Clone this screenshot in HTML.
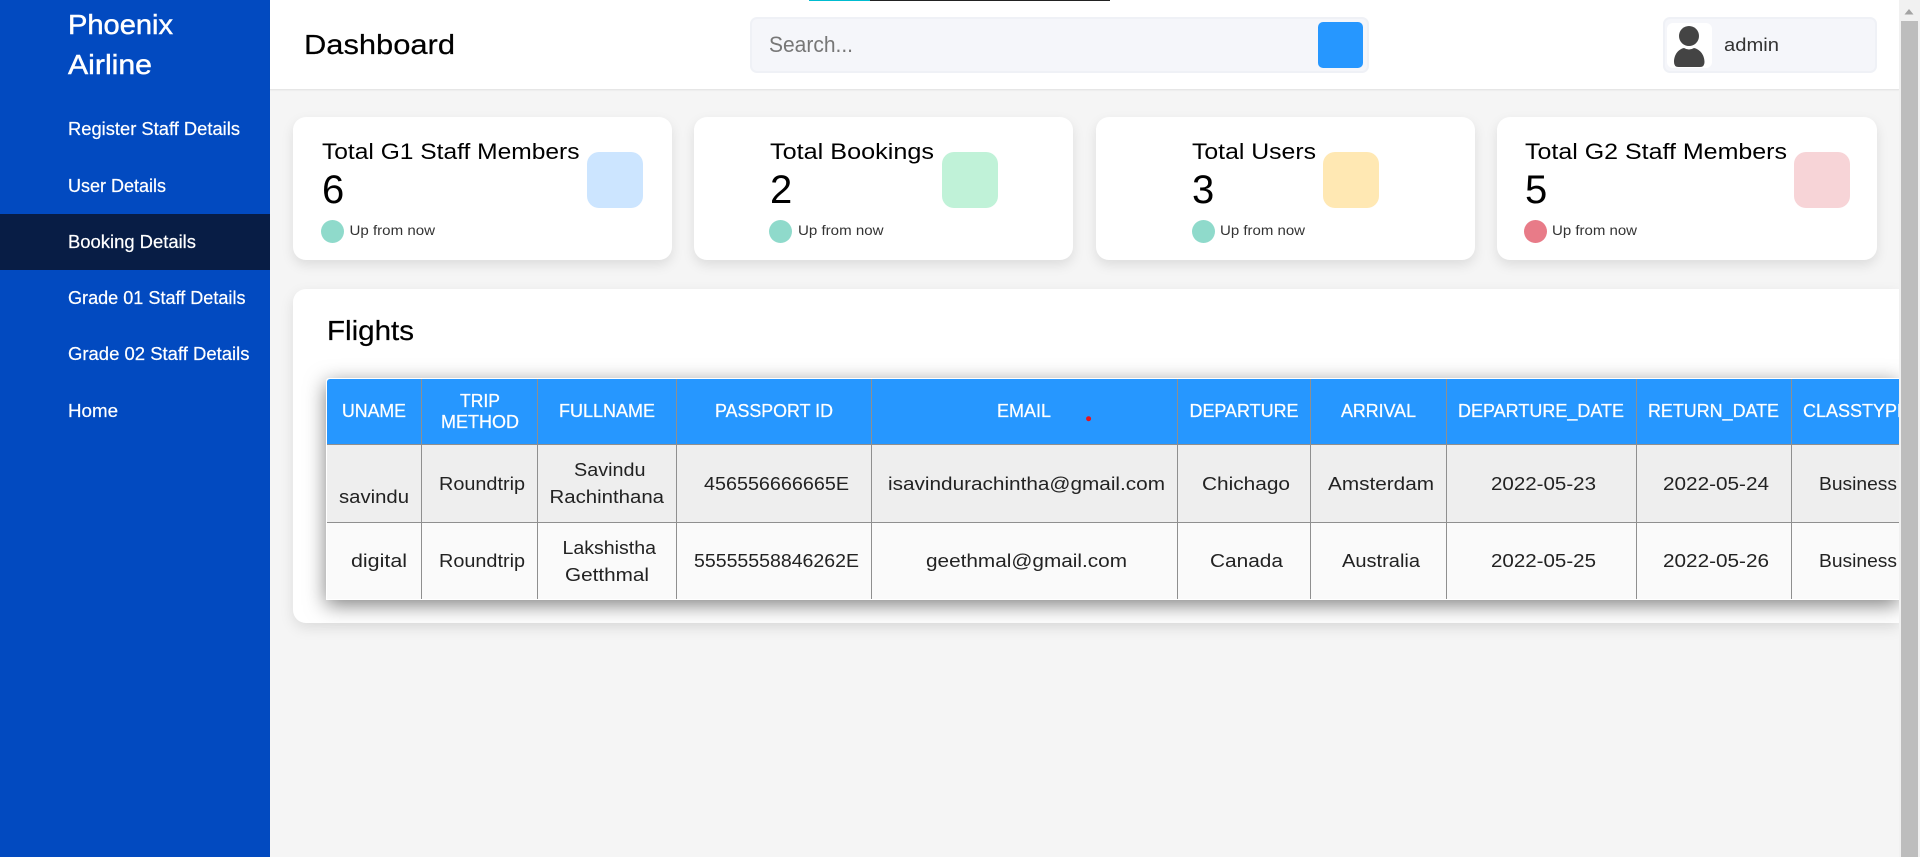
<!DOCTYPE html>
<html lang="en">
<head>
<meta charset="utf-8">
<title>Phoenix Airline Dashboard</title>
<style>
html,body{margin:0;padding:0;width:1920px;height:857px;overflow:hidden;background:#f5f5f5;font-family:"Liberation Sans",sans-serif}
.a{position:absolute;box-sizing:border-box}
.card{top:117px;height:143px;background:#fff;border-radius:13px;box-shadow:0 5px 12px rgba(0,0,0,.1)}
.ic{top:152px;width:56px;height:56px;border-radius:12px}
.dot{top:220px;width:23px;height:23px;border-radius:50%}
.vl{top:379px;width:1px;height:220px;background:#8f8f8f}
svg text{white-space:pre}
.side{font-size:18px;fill:#fff;stroke:#fff;stroke-width:.2px}
.ct{font-size:22px;fill:#000}
.num{font-size:40px;fill:#000}
.up{font-size:14px;fill:#333}
.th{font-size:18px;fill:#fff;stroke:#fff;stroke-width:.25px}
.td{font-size:18px;fill:#222}
</style>
</head>
<body>
<div class="a" style="left:0;top:0;width:270px;height:857px;background:#024ac0"></div>
<div class="a" style="left:0;top:214px;width:270px;height:56px;background:#081d45"></div>

<div class="a" style="left:270px;top:0;width:1629px;height:90px;background:#fff;border-bottom:1px solid #e6e6e6;box-shadow:0 1px 1px rgba(0,0,0,.04)"></div>
<div class="a" style="left:809px;top:0;width:61px;height:1px;background:#00bcd0"></div>
<div class="a" style="left:870px;top:0;width:240px;height:1px;background:#222"></div>

<div class="a" style="left:750px;top:17px;width:619px;height:56px;background:#f5f6fa;border:2px solid #eff1f6;border-radius:7px"></div>
<div class="a" style="left:1318px;top:22px;width:45px;height:46px;background:#2697ff;border-radius:5px"></div>

<div class="a" style="left:1663px;top:17px;width:214px;height:56px;background:#f5f6fa;border:2px solid #eff1f6;border-radius:7px"></div>
<div class="a" style="left:1667px;top:23px;width:45px;height:45px;background:#fff;border-radius:6px"></div>

<div class="a card" style="left:293px;width:379px"></div>
<div class="a card" style="left:694px;width:379px"></div>
<div class="a card" style="left:1096px;width:379px"></div>
<div class="a card" style="left:1497px;width:380px"></div>

<div class="a ic" style="left:587px;background:#cce5ff"></div>
<div class="a ic" style="left:942px;background:#c0f2d8"></div>
<div class="a ic" style="left:1323px;background:#ffe8b3"></div>
<div class="a ic" style="left:1794px;background:#f7d4d7"></div>

<div class="a dot" style="left:321px;background:#8fdacb"></div>
<div class="a dot" style="left:769px;background:#8fdacb"></div>
<div class="a dot" style="left:1192px;background:#8fdacb"></div>
<div class="a dot" style="left:1524px;background:#e87b88"></div>

<div class="a" style="left:293px;top:289px;width:1606px;height:334px;background:#fff;border-radius:13px 0 0 13px;box-shadow:0 5px 14px rgba(0,0,0,.1)"></div>

<div class="a" style="left:326px;top:378px;width:1573px;height:222px;background:#fff;box-shadow:0 5px 20px rgba(0,0,0,.5);border-radius:3px 0 0 0"></div>
<div class="a" style="left:327px;top:379px;width:1572px;height:65px;background:#2697ff;border-radius:3px 0 0 0"></div>
<div class="a" style="left:327px;top:444px;width:1572px;height:78px;background:#eeeeee"></div>
<div class="a" style="left:327px;top:522px;width:1572px;height:77px;background:#fafafa"></div>
<div class="a" style="left:327px;top:444px;width:1572px;height:1px;background:#8f8f8f"></div>
<div class="a" style="left:327px;top:522px;width:1572px;height:1px;background:#8f8f8f"></div>
<div class="a vl" style="left:421px"></div>
<div class="a vl" style="left:537px"></div>
<div class="a vl" style="left:676px"></div>
<div class="a vl" style="left:871px"></div>
<div class="a vl" style="left:1177px"></div>
<div class="a vl" style="left:1310px"></div>
<div class="a vl" style="left:1446px"></div>
<div class="a vl" style="left:1636px"></div>
<div class="a vl" style="left:1791px"></div>

<svg class="a" style="left:0;top:0" width="1920" height="857" viewBox="0 0 1920 857" xmlns="http://www.w3.org/2000/svg">
<g font-family="'Liberation Sans',sans-serif">
<text x="68" y="34" font-size="28" fill="#fff" stroke="#fff" stroke-width=".45" textLength="105" lengthAdjust="spacingAndGlyphs">Phoenix</text>
<text x="68" y="74" font-size="28" fill="#fff" stroke="#fff" stroke-width=".45" textLength="84" lengthAdjust="spacingAndGlyphs">Airline</text>
<text class="side" x="68" y="135" textLength="172" lengthAdjust="spacingAndGlyphs">Register Staff Details</text>
<text class="side" x="68" y="192" textLength="98" lengthAdjust="spacingAndGlyphs">User Details</text>
<text class="side" x="68" y="248" textLength="128" lengthAdjust="spacingAndGlyphs">Booking Details</text>
<text class="side" x="68" y="304" textLength="177.5" lengthAdjust="spacingAndGlyphs">Grade 01 Staff Details</text>
<text class="side" x="68" y="360" textLength="181.5" lengthAdjust="spacingAndGlyphs">Grade 02 Staff Details</text>
<text class="side" x="68" y="417" textLength="50" lengthAdjust="spacingAndGlyphs">Home</text>

<text x="304" y="54" font-size="28" fill="#000" stroke="#000" stroke-width=".2" textLength="151" lengthAdjust="spacingAndGlyphs">Dashboard</text>
<text x="769" y="52" font-size="22" fill="#777" textLength="84" lengthAdjust="spacingAndGlyphs">Search...</text>
<text x="1724" y="51" font-size="18" fill="#333" textLength="55" lengthAdjust="spacingAndGlyphs">admin</text>
<circle cx="1689" cy="36" r="10" fill="#444"/>
<path d="M1674 62C1674 54 1679 49 1684 48Q1689 51 1694 48C1699 49 1704.500 54 1704.500 62Q1704.500 67 1700 67H1678.500Q1674 67 1674 62Z" fill="#444"/>

<text class="ct" x="322" y="159" textLength="257.500" lengthAdjust="spacingAndGlyphs">Total G1 Staff Members</text>
<text class="ct" x="770" y="159" textLength="164" lengthAdjust="spacingAndGlyphs">Total Bookings</text>
<text class="ct" x="1192" y="159" textLength="124" lengthAdjust="spacingAndGlyphs">Total Users</text>
<text class="ct" x="1525" y="159" textLength="262" lengthAdjust="spacingAndGlyphs">Total G2 Staff Members</text>
<text class="num" x="322" y="203">6</text>
<text class="num" x="770" y="203">2</text>
<text class="num" x="1192" y="203">3</text>
<text class="num" x="1525" y="203">5</text>
<text class="up" x="349.500" y="235" textLength="85.500" lengthAdjust="spacingAndGlyphs">Up from now</text>
<text class="up" x="798" y="235" textLength="85.500" lengthAdjust="spacingAndGlyphs">Up from now</text>
<text class="up" x="1220" y="235" textLength="85" lengthAdjust="spacingAndGlyphs">Up from now</text>
<text class="up" x="1552" y="235" textLength="85" lengthAdjust="spacingAndGlyphs">Up from now</text>

<text x="327" y="340" font-size="28" fill="#000" stroke="#000" stroke-width=".2" textLength="87" lengthAdjust="spacingAndGlyphs">Flights</text>

<text class="th" x="342" y="417" textLength="64" lengthAdjust="spacingAndGlyphs">UNAME</text>
<text class="th" x="460" y="407" textLength="40" lengthAdjust="spacingAndGlyphs">TRIP</text>
<text class="th" x="441" y="428" textLength="78" lengthAdjust="spacingAndGlyphs">METHOD</text>
<text class="th" x="559" y="417" textLength="96" lengthAdjust="spacingAndGlyphs">FULLNAME</text>
<text class="th" x="715" y="417" textLength="118" lengthAdjust="spacingAndGlyphs">PASSPORT ID</text>
<text class="th" x="997" y="417" textLength="54" lengthAdjust="spacingAndGlyphs">EMAIL</text>
<text class="th" x="1189.500" y="417" textLength="109" lengthAdjust="spacingAndGlyphs">DEPARTURE</text>
<text class="th" x="1341" y="417" textLength="75" lengthAdjust="spacingAndGlyphs">ARRIVAL</text>
<text class="th" x="1458" y="417" textLength="166" lengthAdjust="spacingAndGlyphs">DEPARTURE_DATE</text>
<text class="th" x="1648" y="417" textLength="131" lengthAdjust="spacingAndGlyphs">RETURN_DATE</text>
<text class="th" x="1803" y="417" textLength="106" lengthAdjust="spacingAndGlyphs">CLASSTYPE</text>
<circle cx="1088.600" cy="418.700" r="2.500" fill="#e8141c"/>

<text class="td" x="339" y="503" textLength="70" lengthAdjust="spacingAndGlyphs">savindu</text>
<text class="td" x="439" y="490" textLength="86" lengthAdjust="spacingAndGlyphs">Roundtrip</text>
<text class="td" x="574" y="476" textLength="71.500" lengthAdjust="spacingAndGlyphs">Savindu</text>
<text class="td" x="549.500" y="503" textLength="114.500" lengthAdjust="spacingAndGlyphs">Rachinthana</text>
<text class="td" x="704" y="490" textLength="145" lengthAdjust="spacingAndGlyphs">456556666665E</text>
<text class="td" x="888" y="490" textLength="277" lengthAdjust="spacingAndGlyphs">isavindurachintha@gmail.com</text>
<text class="td" x="1202" y="490" textLength="88" lengthAdjust="spacingAndGlyphs">Chichago</text>
<text class="td" x="1328" y="490" textLength="106" lengthAdjust="spacingAndGlyphs">Amsterdam</text>
<text class="td" x="1491" y="490" textLength="105" lengthAdjust="spacingAndGlyphs">2022-05-23</text>
<text class="td" x="1663" y="490" textLength="106" lengthAdjust="spacingAndGlyphs">2022-05-24</text>
<text class="td" x="1819" y="490" textLength="78" lengthAdjust="spacingAndGlyphs">Business</text>

<text class="td" x="351" y="567" textLength="56" lengthAdjust="spacingAndGlyphs">digital</text>
<text class="td" x="439" y="567" textLength="86" lengthAdjust="spacingAndGlyphs">Roundtrip</text>
<text class="td" x="562.500" y="554" textLength="93.500" lengthAdjust="spacingAndGlyphs">Lakshistha</text>
<text class="td" x="565" y="581" textLength="84" lengthAdjust="spacingAndGlyphs">Getthmal</text>
<text class="td" x="694" y="567" textLength="165" lengthAdjust="spacingAndGlyphs">55555558846262E</text>
<text class="td" x="926" y="567" textLength="201" lengthAdjust="spacingAndGlyphs">geethmal@gmail.com</text>
<text class="td" x="1210" y="567" textLength="73" lengthAdjust="spacingAndGlyphs">Canada</text>
<text class="td" x="1342" y="567" textLength="78" lengthAdjust="spacingAndGlyphs">Australia</text>
<text class="td" x="1491" y="567" textLength="105" lengthAdjust="spacingAndGlyphs">2022-05-25</text>
<text class="td" x="1663" y="567" textLength="106" lengthAdjust="spacingAndGlyphs">2022-05-26</text>
<text class="td" x="1819" y="567" textLength="78" lengthAdjust="spacingAndGlyphs">Business</text>
</g>
</svg>

<div class="a" style="left:1899px;top:0;width:21px;height:857px;background:#f1f1f1"></div>
<div class="a" style="left:1901px;top:21px;width:17px;height:836px;background:#bdbdbd"></div>
<svg class="a" style="left:1899px;top:0" width="21" height="21" viewBox="0 0 21 21" xmlns="http://www.w3.org/2000/svg"><path d="M5.500 14.500L10 9L14.500 14.500Z" fill="#a3a3a3"/></svg>
</body>
</html>
